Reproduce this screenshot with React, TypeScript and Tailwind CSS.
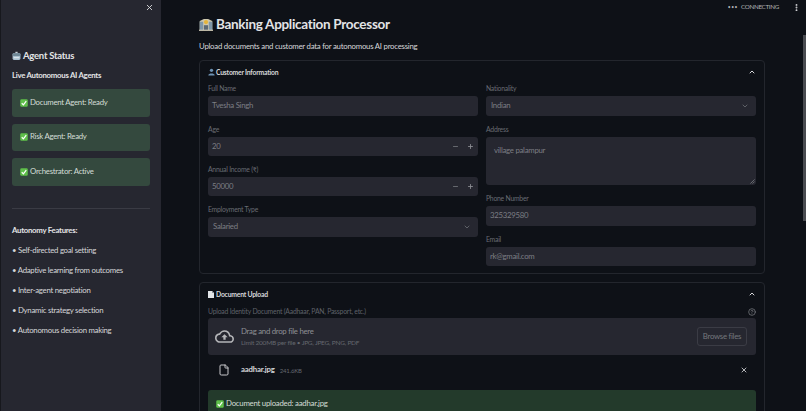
import { ChevronDown, ChevronUp, CircleHelp, EllipsisVertical, File, Minus, Plus, X } from "lucide-react"
import type { ReactNode } from "react"

const agents = ["Document Agent: Ready", "Risk Agent: Ready", "Orchestrator: Active"]

const features = [
  "Self-directed goal setting",
  "Adaptive learning from outcomes",
  "Inter-agent negotiation",
  "Dynamic strategy selection",
  "Autonomous decision making",
]

function CheckEmoji() {
  return (
    <svg viewBox="0 0 16 16" className="w-[8px] h-[8px] shrink-0">
      <rect x="0.5" y="0.5" width="15" height="15" rx="2.5" fill="#5fc04a" />
      <path d="M3.5 8.5 L6.8 11.8 L12.5 4.2" fill="none" stroke="#fff" strokeWidth="2.4" />
    </svg>
  )
}

function RobotEmoji() {
  return (
    <svg viewBox="0 0 16 16" className="w-[9px] h-[10px] shrink-0">
      <rect x="6" y="0.5" width="4" height="3" fill="#c8d0d6" />
      <rect x="1" y="3" width="14" height="12" rx="2.5" fill="#a9c0cf" />
      <rect x="1" y="3" width="14" height="5" rx="2" fill="#6f8795" />
      <rect x="3" y="10" width="10" height="2" fill="#dfe8ee" />
    </svg>
  )
}

function BankEmoji() {
  return (
    <svg viewBox="0 0 20 18" className="w-[14px] h-[13px] shrink-0">
      <path d="M1 4 L7 1 H13 L19 4 V17 H1 Z" fill="#cfc9ae" />
      <rect x="1" y="5" width="5" height="12" fill="#7f97a8" />
      <rect x="14" y="5" width="5" height="12" fill="#7f97a8" />
      <circle cx="10" cy="5.5" r="3" fill="#e5b53a" />
      <rect x="7" y="10" width="6" height="7" fill="#5d6a74" />
      <rect x="0" y="16.5" width="20" height="1.5" fill="#e6dfc6" />
    </svg>
  )
}

function PersonEmoji() {
  return (
    <svg viewBox="0 0 12 12" className="w-[7px] h-[8px] shrink-0">
      <circle cx="6" cy="3.2" r="2.8" fill="#6f93b4" />
      <path d="M0.5 12 C0.5 7.5 11.5 7.5 11.5 12 Z" fill="#6f93b4" />
    </svg>
  )
}

function PageEmoji() {
  return (
    <svg viewBox="0 0 12 14" className="w-[6px] h-[7px] shrink-0">
      <path d="M0 0 H8 L12 4 V14 H0 Z" fill="#e2e5e8" />
      <path d="M8 0 L12 4 H8 Z" fill="#8f979e" />
    </svg>
  )
}

function CloudUpload() {
  return (
    <svg viewBox="0 0 24 24" className="w-[19px] h-[19px] text-[#b4b5b8]" fill="currentColor">
      <path d="M19.35 10.04A7.49 7.49 0 0 0 12 4C9.11 4 6.6 5.64 5.35 8.04A5.994 5.994 0 0 0 0 14c0 3.31 2.69 6 6 6h13c2.76 0 5-2.24 5-5 0-2.64-2.05-4.78-4.65-4.96zM19 18H6c-2.21 0-4-1.79-4-4 0-2.05 1.53-3.76 3.56-3.97l1.07-.11.5-.95A5.469 5.469 0 0 1 12 6c2.62 0 4.88 1.86 5.39 4.43l.3 1.5 1.53.11A2.98 2.98 0 0 1 22 15c0 1.65-1.35 3-3 3zM8 13h2.55v3h2.9v-3H16l-4-4z" />
    </svg>
  )
}

function Field({ label, height, children }: { label: string; height: string; children: ReactNode }) {
  return (
    <div className="flex flex-col">
      <label className="h-[13px] text-[6.8px] tracking-[-0.22px] leading-[11px] text-[#696c73]">{label}</label>
      <div className={`${height} flex items-center bg-[#262730] rounded-[3px] text-[7.8px] tracking-[-0.27px] text-[#7c7e84]`}>{children}</div>
    </div>
  )
}

function TextField({ label, value, height }: { label: string; value: string; height: string }) {
  return (
    <Field label={label} height={height}>
      <span className="pl-1">{value}</span>
    </Field>
  )
}

function NumberField({ label, value }: { label: string; value: string }) {
  return (
    <Field label={label} height="h-[19px]">
      <span className="flex-1 pl-1">{value}</span>
      <Minus className="w-[7px] h-[7px] mr-[8px] text-[#6f7177]" strokeWidth={3} />
      <Plus className="w-[7px] h-[7px] mr-[4px] text-[#8a8c91]" strokeWidth={3} />
    </Field>
  )
}

function SelectField({ label, value, height }: { label: string; value: string; height: string }) {
  return (
    <Field label={label} height={height}>
      <span className="flex-1 pl-[5px]">{value}</span>
      <ChevronDown className="w-[8px] h-[8px] mr-[7px] text-[#7c7e84]" />
    </Field>
  )
}

function Sidebar() {
  return (
    <aside className="relative w-[161px] shrink-0 h-full bg-[#262730] border-l border-[#17181d] pl-[11px] pr-[11px] text-[#e3e4e6]">
      <X className="absolute top-[3px] right-[7px] w-[9px] h-[9px] text-[#d5d6d8]" strokeWidth={2.5} />
      <h2 className="flex items-center gap-[2px] mt-[49px] h-[14px] text-[9.5px] tracking-[-0.25px] font-bold leading-[14px]">
        <RobotEmoji />
        Agent Status
      </h2>
      <p className="mt-[6px] h-[12px] text-[7.8px] tracking-[-0.27px] font-bold leading-[12px]">Live Autonomous AI Agents</p>
      <div className="mt-[8px] flex flex-col gap-[7px]">
        {agents.map((agent) => (
          <div key={agent} className="h-[27.5px] flex items-center gap-[2px] pl-[8px] bg-[#34493e] rounded-[3px] text-[7.8px] tracking-[-0.27px] text-[#d3ddd6]">
            <CheckEmoji />
            {agent}
          </div>
        ))}
      </div>
      <div className="mt-[22px] h-px bg-[#3a3b44]" />
      <p className="mt-[15px] h-[12px] text-[7.8px] tracking-[-0.27px] font-bold leading-[12px]">Autonomy Features:</p>
      <ul className="mt-[8px] flex flex-col gap-[8px]">
        {features.map((feature) => (
          <li key={feature} className="h-[12px] text-[7.8px] tracking-[-0.27px] leading-[12px] text-[#d6d7da]">• {feature}</li>
        ))}
      </ul>
    </aside>
  )
}

export default function App() {
  return (
    <div className="relative flex h-[411px] w-[806px] overflow-hidden bg-[#0e1117] font-['Lato',sans-serif]">
      <Sidebar />

      <main className="flex-1 min-w-0 pl-[38px] pr-[41px] text-[#e3e4e6]">
        <h1 className="flex items-center gap-[3px] mt-[14px] h-[20px] text-[13.5px] tracking-[-0.3px] font-bold leading-[20px]">
          <BankEmoji />
          Banking Application Processor
        </h1>
        <p className="mt-[6px] h-[12px] text-[7.8px] tracking-[-0.24px] leading-[12px] text-[#d6d7da]">Upload documents and customer data for autonomous AI processing</p>

        <section className="mt-[8px] border border-[#23262d] rounded-[4px] px-2 pb-[7px]">
          <div className="flex items-center h-[22px]">
            <PersonEmoji />
            <span className="flex-1 ml-[1px] text-[6.8px] tracking-[-0.22px] font-bold text-[#d6d7da]">Customer Information</span>
            <ChevronUp className="w-[8px] h-[8px] text-[#d6d7da]" strokeWidth={3} />
          </div>
          <div className="grid grid-cols-2 gap-x-2">
            <div className="flex flex-col gap-2">
              <TextField label="Full Name" value="Tvesha Singh" height="h-[20px]" />
              <NumberField label="Age" value="20" />
              <NumberField label="Annual Income (₹)" value="50000" />
              <SelectField label="Employment Type" value="Salaried" height="h-[20px]" />
            </div>
            <div className="flex flex-col gap-2">
              <SelectField label="Nationality" value="Indian" height="h-[20px]" />
              <div className="flex flex-col">
                <label className="h-[13px] text-[6.8px] tracking-[-0.22px] leading-[11px] text-[#696c73]">Address</label>
                <div className="relative h-[48px] bg-[#262730] rounded-[3px] pl-2 pt-[6px] text-[7.8px] tracking-[-0.27px] leading-[14px] text-[#7c7e84]">
                  village palampur
                  <svg viewBox="0 0 6 6" className="absolute right-[1px] bottom-[1px] w-[5px] h-[5px]">
                    <path d="M5.5 0.5 L0.5 5.5 M5.5 3 L3 5.5" stroke="#8a8c91" strokeWidth="0.8" />
                  </svg>
                </div>
              </div>
              <TextField label="Phone Number" value="325329580" height="h-[20px]" />
              <TextField label="Email" value="rk@gmail.com" height="h-[19px]" />
            </div>
          </div>
        </section>

        <section className="mt-[8px] border border-[#23262d] rounded-[4px] px-2 pb-2">
          <div className="flex items-center h-[22px]">
            <PageEmoji />
            <span className="flex-1 ml-[2px] text-[6.8px] tracking-[-0.22px] font-bold text-[#d6d7da]">Document Upload</span>
            <ChevronUp className="w-[8px] h-[8px] text-[#d6d7da]" strokeWidth={3} />
          </div>
          <div className="flex items-center h-[13px]">
            <span className="flex-1 text-[6.8px] tracking-[-0.2px] text-[#5f6269]">Upload Identity Document (Aadhaar, PAN, Passport, etc.)</span>
            <CircleHelp className="w-[8px] h-[8px] text-[#85878c]" />
          </div>
          <div className="flex items-center h-[37px] bg-[#262730] rounded-[3px] pl-[7px] pr-[9px]">
            <CloudUpload />
            <div className="flex-1 ml-[7px]">
              <p className="text-[7.8px] tracking-[-0.27px] leading-[12px] text-[#8e9095]">Drag and drop file here</p>
              <p className="mt-[1px] text-[6.5px] tracking-[-0.22px] leading-[10px] text-[#65686f]">Limit 200MB per file • JPG, JPEG, PNG, PDF</p>
            </div>
            <button className="h-[19px] w-[50px] border border-[#3b3c45] rounded-[3px] text-[7.8px] tracking-[-0.27px] text-[#75777d]">Browse files</button>
          </div>
          <div className="flex items-center h-[35px] pb-[5px] pl-[10px] pr-[8px]">
            <File className="w-[12px] h-[12px] text-[#c8c9cc]" />
            <span className="ml-[11px] text-[7.8px] tracking-[-0.2px] font-bold text-[#d6d7da]">aadhar.jpg</span>
            <span className="flex-1 ml-[5px] text-[6px] tracking-[-0.15px] text-[#65686f]">241.6KB</span>
            <X className="w-[8px] h-[8px] text-[#d6d7da]" strokeWidth={2.5} />
          </div>
          <div className="flex items-center gap-[2px] h-[27px] pl-[8px] bg-[#233a2b] rounded-[3px] text-[7.8px] tracking-[-0.24px] text-[#d3ddd6]">
            <CheckEmoji />
            Document uploaded: aadhar.jpg
          </div>
        </section>
      </main>

      <div className="absolute top-[2px] right-[5px] flex items-center text-[#b0b1b4]">
        <span className="text-[5px] tracking-[0.5px] leading-[10px]">•••</span>
        <span className="ml-[3px] text-[6.3px] tracking-[-0.34px] leading-[10px]">CONNECTING</span>
        <EllipsisVertical className="ml-[13px] w-[9px] h-[9px] text-[#d6d7da]" strokeWidth={3} />
      </div>
      <div className="absolute right-0 top-[35px] w-[3px] h-[186px] bg-[#4a4c51]" />
    </div>
  )
}
